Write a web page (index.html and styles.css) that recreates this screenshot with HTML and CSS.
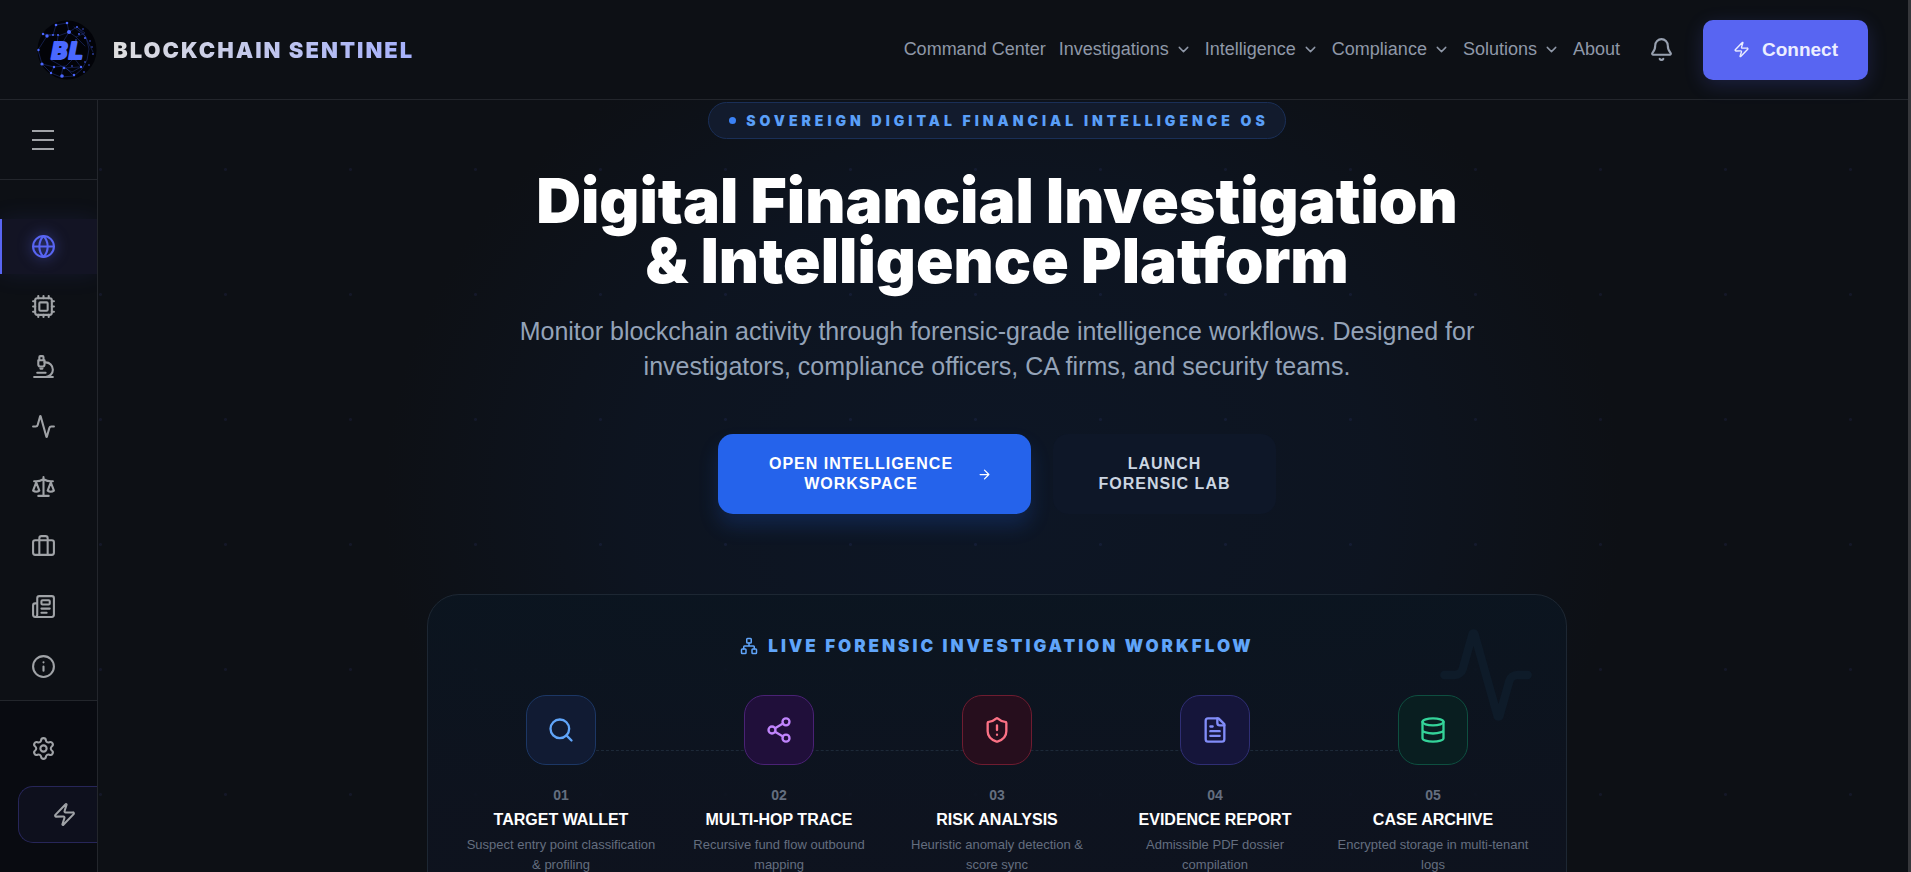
FILE: index.html
```html
<!DOCTYPE html>
<html lang="en">
<head>
    <meta charset="UTF-8">
    <meta name="viewport" content="width=device-width, initial-scale=1.0">
    <title>Blockchain Sentinel</title>
    <link rel="stylesheet" href="styles.css">
</head>
<body>
    <header class="topbar">
        <a class="brand" href="#">
            <svg class="brand-logo" viewBox="0 0 60 60" aria-hidden="true">
                <circle cx="30" cy="30" r="29.500" fill="#020308"/>
                <g stroke="#2c43a8" stroke-width=".5" fill="none" opacity=".8">
                    <path d="M19 5l11-2 2 9 8-5 8 6-9 4-7-5-11 4-1 9M6 14l4 2 6-1 3-10M6 14l13 1M10 16l-9 14 4 14 9 9 10 4 13-1 8-7 5-9 2-11-3-12-8-9M16 47l13-1 8-8 7 9-9 5-9-5-2 10M5 44l12 3-3 6M14 40l14 8 14-1M32 12l-6 10M39 17l9 9M29 48l8 8M37 7l11 9 8 16"/>
                </g>
                <g fill="#4a66ff">
                    <circle cx="19" cy="5" r="1.300"/><circle cx="30" cy="3" r="1.300"/><circle cx="32" cy="12" r="2"/>
                    <circle cx="6" cy="14" r="1.200"/><circle cx="10" cy="16" r="1.700"/><circle cx="16" cy="15" r="1"/>
                    <circle cx="21" cy="15" r="1"/><circle cx="40" cy="7" r=".9"/><circle cx="46" cy="9" r=".7"/>
                    <circle cx="42" cy="14" r=".9"/><circle cx="48" cy="18" r="1"/><circle cx="39" cy="20" r=".7"/>
                    <circle cx="53" cy="21" r=".7"/><circle cx="55" cy="27" r=".7"/><circle cx="56" cy="34" r=".8"/>
                    <circle cx="1.500" cy="30" r="1.200"/><circle cx="5" cy="44" r="1.600"/><circle cx="14" cy="53" r="1.200"/>
                    <circle cx="25" cy="56" r="1.800"/><circle cx="37" cy="55" r="1.200"/><circle cx="17" cy="47" r="1.200"/>
                    <circle cx="27" cy="48" r="1.300"/><circle cx="35" cy="46" r=".8"/><circle cx="44" cy="47" r="1.200"/>
                    <circle cx="48" cy="42" r=".8"/><circle cx="47" cy="52" r=".8"/><circle cx="52" cy="45" r=".7"/>
                </g>
                <text x="30" y="39" class="logo-text" text-anchor="middle">BL</text>
            </svg>
            <span class="brand-name">BLOCKCHAIN SENTINEL</span>
        </a>

        <nav class="topnav">
            <a href="#">Command Center</a>
            <a href="#">Investigations <svg class="chevron" viewBox="0 0 24 24"><path d="m6 9 6 6 6-6"/></svg></a>
            <a href="#">Intelligence <svg class="chevron" viewBox="0 0 24 24"><path d="m6 9 6 6 6-6"/></svg></a>
            <a href="#">Compliance <svg class="chevron" viewBox="0 0 24 24"><path d="m6 9 6 6 6-6"/></svg></a>
            <a href="#">Solutions <svg class="chevron" viewBox="0 0 24 24"><path d="m6 9 6 6 6-6"/></svg></a>
            <a href="#">About</a>
        </nav>

        <button class="bell" aria-label="Notifications">
            <svg viewBox="0 0 24 24"><path d="M10.268 21a2 2 0 0 0 3.464 0"/><path d="M3.262 15.326A1 1 0 0 0 4 17h16a1 1 0 0 0 .74-1.673C19.410 13.956 18 12.499 18 8A6 6 0 0 0 6 8c0 4.499-1.411 5.956-2.738 7.326"/></svg>
        </button>
        <button class="connect">
            <svg viewBox="0 0 24 24"><path d="M4 14a1 1 0 0 1-.78-1.630l9.900-10.200a.5.5 0 0 1 .86.460l-1.920 6.020A1 1 0 0 0 13 10h7a1 1 0 0 1 .78 1.630l-9.900 10.200a.5.5 0 0 1-.86-.460l1.920-6.020A1 1 0 0 0 11 14z"/></svg>
            Connect
        </button>
    </header>

    <div class="layout">
        <aside class="sidebar">
            <div class="sidebar-head">
                <button class="menu" aria-label="Menu"><span></span><span></span><span></span></button>
            </div>
            <nav class="sidebar-nav">
                <a class="side-link active" href="#" aria-label="Command Center">
                    <svg viewBox="0 0 24 24"><circle cx="12" cy="12" r="10"/><path d="M12 2a14.500 14.500 0 0 0 0 20 14.500 14.500 0 0 0 0-20"/><path d="M2 12h20"/></svg>
                </a>
                <a class="side-link" href="#" aria-label="Processing">
                    <svg viewBox="0 0 24 24"><path d="M12 20v2M12 2v2M17 20v2M17 2v2M2 12h2M2 17h2M2 7h2M20 12h2M20 17h2M20 7h2M7 20v2M7 2v2"/><rect x="4" y="4" width="16" height="16" rx="2"/><rect x="8" y="8" width="8" height="8" rx="1"/></svg>
                </a>
                <a class="side-link" href="#" aria-label="Forensic lab">
                    <svg viewBox="0 0 24 24"><path d="M6 18h8M3 22h18M14 22a7 7 0 1 0 0-14h-1M9 14h2"/><path d="M9 12a2 2 0 0 1-2-2V6h6v4a2 2 0 0 1-2 2Z"/><path d="M12 6V3a1 1 0 0 0-1-1H9a1 1 0 0 0-1 1v3"/></svg>
                </a>
                <a class="side-link" href="#" aria-label="Activity">
                    <svg viewBox="0 0 24 24"><path d="M22 12h-2.480a2 2 0 0 0-1.930 1.460l-2.350 8.360a.25.25 0 0 1-.48 0L9.240 2.180a.25.25 0 0 0-.48 0l-2.350 8.360A2 2 0 0 1 4.490 12H2"/></svg>
                </a>
                <a class="side-link" href="#" aria-label="Compliance">
                    <svg viewBox="0 0 24 24"><path d="m16 16 3-8 3 8c-.87.650-1.920 1-3 1s-2.130-.350-3-1Z"/><path d="m2 16 3-8 3 8c-.87.650-1.920 1-3 1s-2.130-.350-3-1Z"/><path d="M7 21h10M12 3v18M3 7h2c2 0 5-1 7-2 2 1 5 2 7 2h2"/></svg>
                </a>
                <a class="side-link" href="#" aria-label="Cases">
                    <svg viewBox="0 0 24 24"><path d="M16 20V4a2 2 0 0 0-2-2h-4a2 2 0 0 0-2 2v16"/><rect width="20" height="14" x="2" y="6" rx="2"/></svg>
                </a>
                <a class="side-link" href="#" aria-label="News">
                    <svg viewBox="0 0 24 24"><path d="M15 18h-5M18 14h-8"/><path d="M4 22h16a2 2 0 0 0 2-2V4a2 2 0 0 0-2-2H8a2 2 0 0 0-2 2v16a2 2 0 0 1-4 0v-9a2 2 0 0 1 2-2h2"/><rect width="8" height="4" x="10" y="6" rx="1"/></svg>
                </a>
                <a class="side-link" href="#" aria-label="About">
                    <svg viewBox="0 0 24 24"><circle cx="12" cy="12" r="10"/><path d="M12 16v-4M12 8h.01"/></svg>
                </a>
            </nav>
            <div class="sidebar-foot">
                <a class="side-link" href="#" aria-label="Settings">
                    <svg viewBox="0 0 24 24"><path d="M9.671 4.136a2.340 2.340 0 0 1 4.659 0 2.340 2.340 0 0 0 3.319 1.915 2.340 2.340 0 0 1 2.330 4.033 2.340 2.340 0 0 0 0 3.831 2.340 2.340 0 0 1-2.330 4.033 2.340 2.340 0 0 0-3.319 1.915 2.340 2.340 0 0 1-4.659 0 2.340 2.340 0 0 0-3.320-1.915 2.340 2.340 0 0 1-2.330-4.033 2.340 2.340 0 0 0 0-3.831A2.340 2.340 0 0 1 6.350 6.051a2.340 2.340 0 0 0 3.319-1.915"/><circle cx="12" cy="12" r="3"/></svg>
                </a>
                <button class="quick" aria-label="Quick connect">
                    <svg viewBox="0 0 24 24"><path d="M4 14a1 1 0 0 1-.78-1.630l9.900-10.200a.5.5 0 0 1 .86.460l-1.920 6.020A1 1 0 0 0 13 10h7a1 1 0 0 1 .78 1.630l-9.900 10.200a.5.5 0 0 1-.86-.460l1.920-6.020A1 1 0 0 0 11 14z"/></svg>
                </button>
            </div>
        </aside>

        <main class="main">
            <div class="badge"><span class="badge-dot"></span>SOVEREIGN DIGITAL FINANCIAL INTELLIGENCE OS</div>
            <h1>Digital Financial Investigation<br>&amp; Intelligence Platform</h1>
            <p class="lead">Monitor blockchain activity through forensic-grade intelligence workflows. Designed for investigators, compliance officers, CA firms, and security teams.</p>

            <div class="actions">
                <button class="btn btn-primary">
                    <span>OPEN INTELLIGENCE<br>WORKSPACE</span>
                    <svg viewBox="0 0 24 24"><path d="M5 12h14M12 5l7 7-7 7"/></svg>
                </button>
                <button class="btn btn-dark">LAUNCH<br>FORENSIC LAB</button>
            </div>

            <section class="workflow">
                <svg class="watermark" viewBox="0 0 24 24"><path d="M22 12h-2.480a2 2 0 0 0-1.930 1.460l-2.350 8.360a.25.25 0 0 1-.48 0L9.240 2.180a.25.25 0 0 0-.48 0l-2.350 8.360A2 2 0 0 1 4.490 12H2"/></svg>
                <h2>
                    <svg viewBox="0 0 24 24"><rect x="16" y="16" width="6" height="6" rx="1"/><rect x="2" y="16" width="6" height="6" rx="1"/><rect x="9" y="2" width="6" height="6" rx="1"/><path d="M5 16v-3a1 1 0 0 1 1-1h12a1 1 0 0 1 1 1v3M12 12V8"/></svg>
                    LIVE FORENSIC INVESTIGATION WORKFLOW
                </h2>
                <div class="steps">
                    <div class="step">
                        <div class="step-icon blue"><svg viewBox="0 0 24 24"><circle cx="11" cy="11" r="8"/><path d="m21 21-4.340-4.340"/></svg></div>
                        <div class="step-number">01</div>
                        <h3>TARGET WALLET</h3>
                        <p>Suspect entry point classification &amp; profiling</p>
                    </div>
                    <div class="step">
                        <div class="step-icon purple"><svg viewBox="0 0 24 24"><circle cx="18" cy="5" r="3"/><circle cx="6" cy="12" r="3"/><circle cx="18" cy="19" r="3"/><path d="m8.590 13.510 6.830 3.980M15.410 6.510l-6.820 3.980"/></svg></div>
                        <div class="step-number">02</div>
                        <h3>MULTI-HOP TRACE</h3>
                        <p>Recursive fund flow outbound mapping</p>
                    </div>
                    <div class="step">
                        <div class="step-icon red"><svg viewBox="0 0 24 24"><path d="M20 13c0 5-3.500 7.500-7.660 8.950a1 1 0 0 1-.67-.010C7.500 20.500 4 18 4 13V6a1 1 0 0 1 1-1c2 0 4.500-1.200 6.240-2.720a1.170 1.170 0 0 1 1.520 0C14.510 3.810 17 5 19 5a1 1 0 0 1 1 1z"/><path d="M12 8v4M12 16h.01"/></svg></div>
                        <div class="step-number">03</div>
                        <h3>RISK ANALYSIS</h3>
                        <p>Heuristic anomaly detection &amp; score sync</p>
                    </div>
                    <div class="step">
                        <div class="step-icon indigo"><svg viewBox="0 0 24 24"><path d="M15 2H6a2 2 0 0 0-2 2v16a2 2 0 0 0 2 2h12a2 2 0 0 0 2-2V7Z"/><path d="M14 2v4a2 2 0 0 0 2 2h4M10 9H8M16 13H8M16 17H8"/></svg></div>
                        <div class="step-number">04</div>
                        <h3>EVIDENCE REPORT</h3>
                        <p>Admissible PDF dossier compilation</p>
                    </div>
                    <div class="step">
                        <div class="step-icon green"><svg viewBox="0 0 24 24"><ellipse cx="12" cy="5" rx="9" ry="3"/><path d="M3 5v14a9 3 0 0 0 18 0V5M3 12a9 3 0 0 0 18 0"/></svg></div>
                        <div class="step-number">05</div>
                        <h3>CASE ARCHIVE</h3>
                        <p>Encrypted storage in multi-tenant logs</p>
                    </div>
                </div>
            </section>
        </main>
    </div>
</body>
</html>
```
FILE: styles.css
```css
* {
    margin: 0;
    padding: 0;
    box-sizing: border-box;
}

body {
    display: flex;
    flex-direction: column;
    height: 100vh;
    overflow: hidden;
    background: #0d1015;
    border-right: 3px solid #36373b;
    font-family: "Liberation Sans", Arial, sans-serif;
    color: white;
}

a {
    color: inherit;
    text-decoration: none;
}

button {
    font-family: inherit;
    color: inherit;
    background: none;
    border: none;
    cursor: pointer;
}

svg {
    flex-shrink: 0;
    fill: none;
    stroke: currentColor;
    stroke-width: 2;
    stroke-linecap: round;
    stroke-linejoin: round;
}

/* top bar */
.topbar {
    display: flex;
    align-items: center;
    flex-shrink: 0;
    height: 100px;
    padding: 0 40px 0 37px;
    border-bottom: 1px solid #23262c;
}

.brand {
    display: flex;
    align-items: center;
    gap: 16px;
    margin-right: auto;
}

.brand-logo {
    width: 60px;
    height: 60px;
    stroke: none;
}

.logo-text {
    font: italic bold 23px "DejaVu Sans", sans-serif;
    fill: #4a68ff;
    stroke: #4a68ff;
    stroke-width: 2;
}

.brand-name {
    font-family: Inter, sans-serif;
    font-size: 22px;
    font-weight: 900;
    letter-spacing: 2px;
    background: linear-gradient(90deg, #dedede, #a5b0fc);
    -webkit-background-clip: text;
    background-clip: text;
    color: transparent;
}

.topnav {
    display: flex;
    gap: 13px;
    font-size: 18px;
    color: #8f98a8;
}

.topnav a {
    display: flex;
    align-items: center;
    gap: 6px;
}

.chevron {
    width: 17px;
    height: 17px;
}

.bell {
    display: flex;
    margin: 0 29px;
    color: #98a1b0;
}

.bell svg {
    width: 25px;
    height: 25px;
}

.connect {
    display: flex;
    align-items: center;
    justify-content: center;
    gap: 12px;
    width: 165px;
    height: 60px;
    border-radius: 10px;
    background: #5865f2;
    box-shadow: 0 5px 19px rgba(88, 101, 242, 0.2);
    font-size: 19px;
    font-weight: bold;
    color: #eceeff;
}

.connect svg {
    width: 17px;
    height: 17px;
}

.layout {
    display: flex;
    flex: 1;
    min-height: 0;
}

/* sidebar */
.sidebar {
    display: flex;
    flex-direction: column;
    flex-shrink: 0;
    width: 98px;
    overflow: hidden;
    border-right: 1px solid #23262c;
    color: #a0a3a7;
}

.sidebar svg {
    width: 25px;
    height: 25px;
}

.sidebar-head {
    display: flex;
    align-items: center;
    height: 80px;
    padding-left: 32px;
    border-bottom: 1px solid #23262c;
}

.menu {
    display: flex;
    flex-direction: column;
    gap: 7px;
}

.menu span {
    width: 22px;
    height: 2px;
    background: #a0a3a7;
}

.sidebar-nav {
    display: flex;
    flex-direction: column;
    flex: 1;
    gap: 5px;
    padding-top: 39px;
}

.side-link {
    display: flex;
    align-items: center;
    height: 55px;
    padding-left: 31px;
}

.side-link.active {
    padding-left: 29px;
    border-left: 2px solid #5865f2;
    background: #131424;
    box-shadow: 0 0 25px rgba(88, 101, 242, 0.1);
    color: #5865f2;
}

.side-link.active svg {
    filter: drop-shadow(0 0 7px rgba(88, 101, 242, 0.6));
}

.sidebar-foot {
    display: flex;
    flex-direction: column;
    gap: 10px;
    padding: 20px 0 29px;
    border-top: 1px solid #23262c;
    background: #090b11;
}

.quick {
    display: flex;
    align-items: center;
    height: 57px;
    margin-left: 18px;
    padding-left: 33px;
    border: 1px solid #272659;
    border-right: none;
    border-radius: 15px 0 0 15px;
    background: #0e101d;
}

/* hero */
.main {
    display: flex;
    flex-direction: column;
    align-items: center;
    flex: 1;
    min-width: 0;
    padding: 2px 12px 0 0;
    background:
        radial-gradient(circle, rgba(80, 90, 200, 0.1) 1px, transparent 2px) -60px 7px / 125px 125px,
        radial-gradient(ellipse 620px 520px at 50% 400px, #0d1625, rgba(13, 22, 37, 0.7) 60%, rgba(13, 22, 37, 0));
    text-align: center;
}

.badge {
    display: flex;
    align-items: center;
    flex-shrink: 0;
    gap: 10px;
    height: 37px;
    padding: 0 16px 0 20px;
    border: 1px solid #1a2f57;
    border-radius: 19px;
    background: #121b2d;
    font-family: Inter, sans-serif;
    font-size: 14px;
    font-weight: 900;
    letter-spacing: 4px;
    color: #5a9ff8;
}

.badge-dot {
    width: 7px;
    height: 7px;
    border-radius: 50%;
    background: #3b82f6;
}

h1 {
    margin-top: 32px;
    font-family: Inter, sans-serif;
    font-size: 62px;
    font-weight: 900;
    line-height: 60px;
}

.lead {
    max-width: 960px;
    margin-top: 23px;
    font-size: 25px;
    line-height: 35px;
    color: #94a3b8;
}

.actions {
    display: flex;
    align-items: center;
    gap: 22px;
    margin-top: 50px;
}

.btn {
    display: flex;
    align-items: center;
    justify-content: center;
    font-size: 16px;
    font-weight: bold;
    line-height: 20px;
    letter-spacing: 1px;
}

.btn-primary {
    gap: 24px;
    width: 313px;
    height: 80px;
    padding-left: 12px;
    border-radius: 15px;
    background: #2563eb;
    box-shadow: 0 12px 20px rgba(37, 99, 235, 0.2);
}

.btn-primary svg {
    width: 15px;
    height: 15px;
}

.btn-dark {
    width: 223px;
    height: 80px;
    border-radius: 15px;
    background: #0e1728;
    color: #cbd5e1;
}

/* workflow card */
.workflow {
    position: relative;
    flex-shrink: 0;
    width: 100%;
    max-width: 1140px;
    margin-top: 80px;
    padding: 41px 24px;
    border: 1px solid #1d2733;
    border-radius: 32px;
    background: linear-gradient(rgba(11, 21, 32, 0.9), rgba(14, 19, 31, 0.9) 70%);
}

.watermark {
    position: absolute;
    top: 30px;
    right: 30px;
    width: 100px;
    height: 100px;
    color: #0e1b29;
}

h2 {
    display: flex;
    align-items: center;
    justify-content: center;
    gap: 10px;
    font-family: Inter, sans-serif;
    font-size: 17px;
    font-weight: 900;
    line-height: 20px;
    letter-spacing: 3px;
    color: #60a5fa;
}

h2 svg {
    width: 18px;
    height: 18px;
}

.steps {
    position: relative;
    display: grid;
    grid-template-columns: repeat(5, 1fr);
    margin-top: 39px;
}

.steps::before {
    content: "";
    position: absolute;
    top: 55px;
    left: 10%;
    right: 10%;
    border-top: 1px dashed #1d2938;
}

.step {
    display: flex;
    flex-direction: column;
    align-items: center;
    padding: 0 10px;
}

.step-icon {
    position: relative;
    display: flex;
    align-items: center;
    justify-content: center;
    width: 70px;
    height: 70px;
    margin-bottom: 20px;
    border: 1px solid;
    border-radius: 20px;
}

.step-icon svg {
    width: 28px;
    height: 28px;
}

.blue {
    background: #111b33;
    border-color: #1c3765;
    color: #60a5fa;
}

.purple {
    background: #200f3a;
    border-color: #4a2275;
    color: #c084fc;
}

.red {
    background: #260e1d;
    border-color: #6f1c30;
    color: #fb7185;
}

.indigo {
    background: #15153a;
    border-color: #2f2e74;
    color: #818cf8;
}

.green {
    background: #091e20;
    border-color: #0e4f40;
    color: #34d399;
}

.step-number {
    font-size: 14px;
    font-weight: bold;
    line-height: 20px;
    color: #646e7f;
}

h3 {
    margin-top: 5px;
    font-size: 16px;
    line-height: 20px;
}

.step p {
    margin-top: 5px;
    font-size: 13px;
    line-height: 20px;
    color: #646e7f;
}
```
